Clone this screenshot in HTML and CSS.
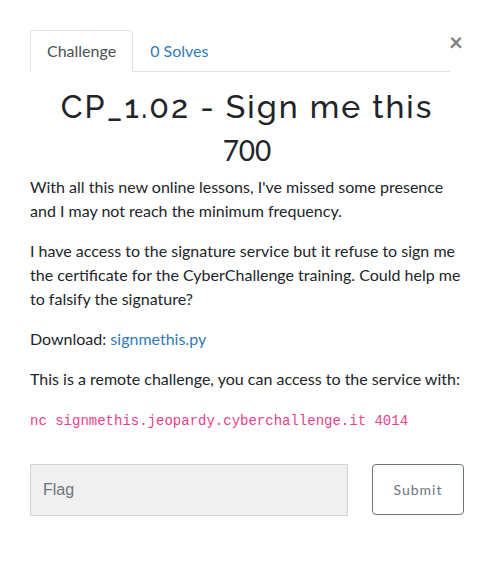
FILE: index.html
```html
<!DOCTYPE html>
<html lang="en">
<head>
<meta charset="utf-8">
<meta name="viewport" content="width=device-width, initial-scale=1">
<title>Challenge</title>
<link rel="stylesheet" href="styles.css">
</head>
<body>
<main class="modal">
  <button class="close" type="button" aria-label="Close">×</button>
  <nav class="tabs">
    <a class="tab tab-active" href="#challenge">Challenge</a>
    <a class="tab" href="#solves">0 Solves</a>
  </nav>
  <section id="challenge">
    <h2 class="title">CP_1.02 - Sign me this</h2>
    <h3 class="points">700</h3>
    <div class="description">
      <p>With all this new online lessons, I've missed some presence and I may not reach the minimum frequency.</p>
      <p>I have access to the signature service but it refuse to sign me the certificate for the CyberChallenge training. Could help me to falsify the signature?</p>
      <p>Download: <a href="#signmethis.py">signmethis.py</a></p>
      <p>This is a remote challenge, you can access to the service with:</p>
      <p><code>nc signmethis.jeopardy.cyberchallenge.it 4014</code></p>
    </div>
    <form class="submit-row">
      <input class="flag" type="text" placeholder="Flag" aria-label="Flag">
      <button class="submit" type="button">Submit</button>
    </form>
  </section>
</main>
</body>
</html>
```

FILE: styles.css
```css
* {
  box-sizing: border-box;
}

body {
  margin: 0;
  background: #fff;
  color: #212529;
  font-family: Lato, sans-serif;
  font-size: 16px;
  line-height: 24px;
}

a {
  color: #337ab7;
  text-decoration: none;
}

.modal {
  position: relative;
  padding: 30px;
}

.close {
  position: absolute;
  top: 30px;
  right: 31px;
  padding: 0;
  border: 0;
  background: none;
  color: #808080;
  font: 700 24px/24px Lato, sans-serif;
}

.tabs {
  display: flex;
  margin-right: 14px;
  border-bottom: 1px solid #dee2e6;
}

.tab {
  margin-bottom: -1px;
  padding: 8px 16px;
  border: 1px solid transparent;
  border-radius: 4px 4px 0 0;
}

.tab-active {
  border-color: #dee2e6 #dee2e6 #fff;
  background: #fff;
  color: #495057;
}

.title,
.points {
  margin: 0 0 8px;
  text-align: center;
}

.title {
  padding-top: 16px;
  font-family: Raleway, sans-serif;
  font-size: 32px;
  font-weight: 500;
  line-height: 38px;
  letter-spacing: 2px;
}

.points {
  font-size: 28px;
  font-weight: 400;
  line-height: 33px;
}

.description p {
  margin: 0 0 16px;
}

code {
  color: #e83e8c;
  font-family: "Liberation Mono", monospace;
  font-size: 14px;
}

.submit-row {
  display: flex;
  gap: 24px;
  padding-top: 15px;
}

.flag {
  flex: 1;
  min-width: 0;
  height: 52px;
  padding: 12px;
  border: 1px solid #ced4da;
  border-radius: 0;
  background: #f0f0f0;
  color: #495057;
  font: 16px "Liberation Sans", sans-serif;
}

.flag::placeholder {
  color: #6c757d;
}

.submit {
  width: 92px;
  height: 51px;
  padding: 0;
  border: 1px solid #6c757d;
  border-radius: 4px;
  background: #fff;
  color: #6c757d;
  font: 14px Lato, sans-serif;
  letter-spacing: 1px;
}
```
